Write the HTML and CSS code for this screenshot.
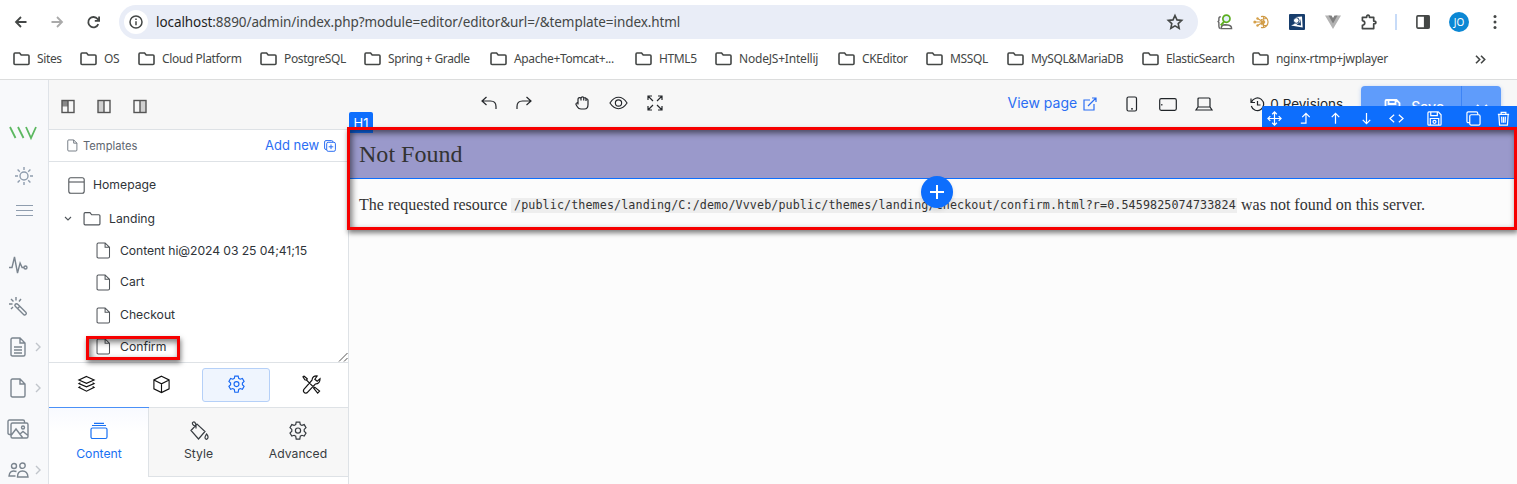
FILE: index.html
```html
<!DOCTYPE html>
<html lang="en">
<head>
<meta charset="utf-8">
<title>Page editor</title>
<link rel="stylesheet" href="styles.css">
</head>
<body>
<svg class="defs" width="0" height="0">
  <symbol id="folder" viewBox="0 0 17 14"><path d="M1 2.2V11.6Q1 12.5 2 12.5H15Q16 12.5 16 11.6V4Q16 3 15 3H8.2L6.6 1H2Q1 1 1 2.2Z"/></symbol>
  <symbol id="file" viewBox="0 0 16 18"><path d="M2.5 .9H9.7L14.4 5.6V15.6Q14.4 17 13 17H2.5Q1.1 17 1.1 15.6V2.3Q1.1 .9 2.5 .9ZM9.7 .9V5.6H14.4"/></symbol>
  <symbol id="gear" viewBox="0 0 20 20"><path d="M8.2 1.2h3.6l.5 2.3 1.6.9 2.3-.8 1.8 3.1-1.8 1.7v1.9l1.8 1.7-1.8 3.1-2.3-.8-1.6.9-.5 2.9H8.2l-.5-2.9-1.6-.9-2.3.8L2 12l1.8-1.7V8.4L2 6.7l1.8-3.1 2.3.8 1.6-.9Z"/><circle cx="10" cy="9.6" r="2.6"/></symbol>
  <symbol id="floppy" viewBox="0 0 16 16"><path d="M1 2Q1 1 2 1H12L15 4V14Q15 15 14 15H2Q1 15 1 14ZM4 1.2V5H11V1.2M3.5 15V8H12.5V15"/><circle cx="8" cy="11.5" r="1.6"/></symbol>
  <symbol id="chevron" viewBox="0 0 6 10"><path d="M1 1l4 4-4 4"/></symbol>
</svg>

<header class="browser">
  <div class="navbar">
    <svg class="nav-ico back" viewBox="0 0 12 12"><path d="M11.5 6H1M6 1L1 6l5 5"/></svg>
    <svg class="nav-ico forward" viewBox="0 0 12 12"><path d="M.5 6H11M6 1l5 5-5 5"/></svg>
    <svg class="nav-ico reload" viewBox="0 0 13 13"><path d="M11.3 8.2A5.2 5.2 0 1 1 10.6 3L12 4.6M12.1 .5V4.9H7.8"/></svg>
    <div class="address">
      <span class="info"><svg viewBox="0 0 14 14"><circle cx="7" cy="7" r="6"/><path d="M7 6.3v4M7 3.6v1.5"/></svg></span>
      <span class="url"><b>localhost</b>:8890/admin/index.php?module=editor/editor&amp;url=/&amp;template=index.html</span>
      <svg class="star" viewBox="0 0 16 16"><path d="M8 1.5l2 4.4 4.7.5-3.5 3.2 1 4.7L8 11.9l-4.2 2.4 1-4.7L1.300 6.400 6 5.900Z"/></svg>
    </div>
    <div class="extensions">
      <svg class="ext" viewBox="0 0 16 17"><path d="M3.500 3Q1.500 3 1.500 5V7L.7 8l.8 1v4Q1.500 15 3 15.500M4 15.500q0-4 4-4l3 .2q4 .5 4 3.800Z" fill="none" stroke="#666" stroke-width="1.500"/><circle cx="9.500" cy="5" r="3.800" fill="#e3f1fb" stroke="#5dae20" stroke-width="1.800"/><path d="M7 8L3.500 12" stroke="#5dae20" stroke-width="2"/></svg>
      <svg class="ext" viewBox="0 0 16 16"><path d="M8 2.600a5.600 5.600 0 1 1 0 10.800M1.500 8H10.500M4.500 4.500L10.500 8 4.500 11.500M10.500 2.500V13.500M8 5.500l5-1M8 10.500l5 1" fill="none" stroke="#cf9a45" stroke-width="1.200"/><circle cx="1.800" cy="8" r="1.500" fill="#d6a14a"/><circle cx="4.500" cy="4.500" r="1.200" fill="#d6a14a"/><circle cx="4.500" cy="11.500" r="1.200" fill="#d6a14a"/><circle cx="10.500" cy="8" r="1.800" fill="#d6a14a"/></svg>
      <svg class="ext" viewBox="0 0 16 16"><rect width="16" height="16" rx="1" fill="#173d6c"/><path d="M7 3L13 2.500 13.700 13.500 2 11.500 5.500 10" fill="#fff"/><path d="M11.500 4.500L12 11.500 7.500 10.800 11 8Z" fill="#173d6c"/><circle cx="7.300" cy="6.500" r="2.800" fill="#fff" stroke="#173d6c" stroke-width="1"/></svg>
      <svg class="ext" viewBox="0 0 16 16"><path d="M0 1.500h4.500L8 8l3.500-6.500H16L8 15Z" fill="#b3b3b3"/><path d="M3.500 1.500h3L8 4l1.500-2.500h3L8 9.500Z" fill="#808080"/></svg>
      <svg class="ext" viewBox="0 0 17 17"><path d="M1.500 3.500H6Q6 1.200 7.500 1.200T9 3.500h4.500V7.500Q15.800 7.500 15.800 9T13.500 10.500V15.500H1.500V12Q4 11.500 4 9.500T1.500 7Z" fill="none" stroke="#444746" stroke-width="1.800" stroke-linejoin="round"/></svg>
    </div>
    <span class="separator"></span>
    <svg class="side-ico" viewBox="0 0 14 14"><rect x=".9" y=".9" width="12.200" height="12.200" rx="1" fill="none" stroke="#444746" stroke-width="1.600"/><path d="M8.500 1H13V13H8.500Z" fill="#444746"/></svg>
    <span class="avatar">JO</span>
    <svg class="kebab" viewBox="0 0 4 16"><circle cx="2" cy="2.500" r="1.500"/><circle cx="2" cy="8" r="1.500"/><circle cx="2" cy="13.500" r="1.500"/></svg>
  </div>
  <nav class="bookmarks">
    <span class="bm"><svg><use href="#folder"/></svg><span>Sites</span></span>
    <span class="bm"><svg><use href="#folder"/></svg><span>OS</span></span>
    <span class="bm"><svg><use href="#folder"/></svg><span>Cloud Platform</span></span>
    <span class="bm"><svg><use href="#folder"/></svg><span>PostgreSQL</span></span>
    <span class="bm"><svg><use href="#folder"/></svg><span>Spring + Gradle</span></span>
    <span class="bm"><svg><use href="#folder"/></svg><span>Apache+Tomcat+...</span></span>
    <span class="bm"><svg><use href="#folder"/></svg><span>HTML5</span></span>
    <span class="bm wide"><svg><use href="#folder"/></svg><span>NodeJS+Intellij</span></span>
    <span class="bm"><svg><use href="#folder"/></svg><span>CKEditor</span></span>
    <span class="bm"><svg><use href="#folder"/></svg><span>MSSQL</span></span>
    <span class="bm"><svg><use href="#folder"/></svg><span>MySQL&amp;MariaDB</span></span>
    <span class="bm"><svg><use href="#folder"/></svg><span>ElasticSearch</span></span>
    <span class="bm last"><svg><use href="#folder"/></svg><span>nginx-rtmp+jwplayer</span></span>
    <svg class="more" viewBox="0 0 11 9"><path d="M1 .8l3.700 3.700L1 8.200M6 .8l3.700 3.700L6 8.200"/></svg>
  </nav>
</header>

<div class="app">
  <aside class="rail">
    <svg class="logo" viewBox="0 0 28 13"><path d="M1 1l5.500 11M9 1l5.500 11M17 1l5 11L27 1" /></svg>
    <svg class="sun" viewBox="0 0 18 18"><circle cx="9" cy="9" r="4"/><path d="M9 0v3M9 15v3M0 9h3M15 9h3M2.600 2.600l2.200 2.200M13.200 13.200l2.200 2.200M2.600 15.400l2.200-2.200M13.200 4.800l2.200-2.200"/></svg>
    <svg class="burger" viewBox="0 0 17 11"><path d="M0 .5h17M0 5.500h17M0 10.500h17"/></svg>
    <div class="rail-row r1"><svg class="i20" viewBox="0 0 20 20"><path d="M1 12.500H4L6.500 2l3 16 2.600-10 2 4.500H16"/><circle cx="17.500" cy="12.500" r="1.500"/></svg></div>
    <div class="rail-row r2"><svg class="i20" viewBox="0 0 20 20"><path d="M7 8.500q1.500-1.500 3 0l8 8q.8 1-.2 2t-2 .2L7.500 10.500Q6.500 9.500 7 8.500M10 12l2-2M8 1v3.500M3 3l2.500 2.500M1 8h3.500M13 3l-2 2.500M3 13l2-2"/></svg></div>
    <div class="rail-row r3"><svg class="i20 f" viewBox="0 0 16 20"><path d="M2.500 1H10l5 5V17.500Q15 19 13.500 19H2.500Q1 19 1 17.500V2.500Q1 1 2.500 1ZM10 1V6H15M4 10H12M4 13H12M4 16H12"/></svg><svg class="chev"><use href="#chevron"/></svg></div>
    <div class="rail-row r4"><svg class="i20 f" viewBox="0 0 16 20"><path d="M2.500 1H10l5 5V17.500Q15 19 13.500 19H2.500Q1 19 1 17.500V2.500Q1 1 2.500 1ZM10 1V6H15"/></svg><svg class="chev"><use href="#chevron"/></svg></div>
    <div class="rail-row r5"><svg class="pics" viewBox="0 0 22 20"><path d="M4 15.500H2.500Q1 15.500 1 14V2.500Q1 1 2.500 1H16Q17.500 1 17.500 2.500V4M5.500 4H19.500Q21 4 21 5.500V17.500Q21 19 19.500 19H5.500Q4 19 4 17.500V5.500Q4 4 5.500 4M4 16.500l5-6.500 6.500 8.500M13 15l3-2.500 5 4"/><circle cx="16" cy="8.500" r="1.500"/></svg></div>
    <div class="rail-row r6"><svg class="people" viewBox="0 0 21 16"><circle cx="6" cy="4" r="2.500"/><circle cx="14.500" cy="3.700" r="2.700"/><path d="M9.500 15q0-6 5-6t5.500 6ZM8.500 9.500Q1.500 7.500 1 14H7.500"/></svg><svg class="chev"><use href="#chevron"/></svg></div>
  </aside>

  <div class="workspace">
    <div class="toolbar">
      <div class="layouts">
        <svg viewBox="0 0 14 14"><rect class="fill2" x="1" y="1" width="6" height="6"/><rect x="1" y="1" width="12" height="12"/><path d="M7 1V13"/></svg>
        <svg viewBox="0 0 14 14"><rect class="fill" x="1" y="1" width="6" height="12"/><rect x="1" y="1" width="12" height="12"/><path d="M7 1V13"/></svg>
        <svg viewBox="0 0 14 14"><rect class="fill" x="7" y="1" width="6" height="12"/><rect x="1" y="1" width="12" height="12"/><path d="M7 1V13"/></svg>
      </div>
      <div class="tools">
        <svg class="undo" viewBox="0 0 16 14"><path d="M5.500 1L1 5l4.500 4M1 5h8.500Q15 5 15 10.500V13"/></svg>
        <svg class="redo" viewBox="0 0 16 14"><path d="M10.500 1L15 5l-4.500 4M15 5H6.500Q1 5 1 10.500V13"/></svg>
        <svg class="hand" viewBox="0 0 14 14"><path d="M3 8.500V3.500Q3 1.700 4.500 1.700T6 2.200Q6.300 .9 7.500 .9T9 2Q10.800 1.200 11 3 13 2.500 13 4.500V8.500Q13 13 9.500 13H6Q3.500 13 2.500 11L1 8.500Q.8 6.500 3 7M6 2.200V4.500M8.700 2.200V4.500M11 3V5"/></svg>
        <svg class="eye" viewBox="0 0 20 14"><path d="M1 7Q5 1 10 1t9 6q-4 6-9 6T1 7Z"/><circle cx="10" cy="7" r="3.300"/></svg>
        <svg class="expand" viewBox="0 0 16 16"><path d="M1 5V1H5M1 1l5 5M11 1h4V5M15 1l-5 5M1 11v4H5M1 15l5-5M15 11v4H11M15 15l-5-5"/></svg>
      </div>
      <a class="view">View page</a>
      <svg class="external" viewBox="0 0 14 14"><path d="M7 3H1V13H11V7M5 9L13 1M9 1h4V5"/></svg>
      <svg class="phone" viewBox="0 0 12 16"><rect x="1" y="1" width="9.500" height="14" rx="1.500"/><path d="M5 12.800h2"/></svg>
      <svg class="tablet" viewBox="0 0 18 13"><rect x=".7" y=".7" width="16.600" height="11.600" rx="1.500"/><path d="M2.800 6v1.500"/></svg>
      <svg class="laptop" viewBox="0 0 18 14"><path d="M3 10V2Q3 1 4 1H14Q15 1 15 2V10M3 10H15L17 13H1Z"/></svg>
      <svg class="history" viewBox="0 0 15 15"><path d="M1 1.500V5.500H5M1.500 5A6.300 6.300 0 1 1 1.300 9M7.500 4V8H10.500"/></svg>
      <span class="revisions">0 Revisions</span>
      <div class="save"><span class="save-main"><svg><use href="#floppy"/></svg>Save</span><span class="save-more"><svg viewBox="0 0 12 8"><path d="M1 1l5 5 5-5"/></svg></span></div>
    </div>

    <div class="body">
      <aside class="panel">
        <div class="panel-head"><svg class="doc"><use href="#file"/></svg><span class="head-title">Templates</span><a class="add">Add new</a><svg class="plus-ico" viewBox="0 0 12 12"><path d="M2.700 9.500H2Q.6 9.500 .6 8V2Q.6 .6 2 .6H7.500Q9 .6 9 2"/><rect x="2.700" y="2.300" width="8.700" height="9" rx="1.500"/><path d="M7 4.500v4.600M4.700 6.800h4.600"/></svg></div>
        <div class="tree">
          <div class="node home"><svg viewBox="0 0 17 17"><rect x=".8" y=".8" width="15.400" height="15.400" rx="2"/><path d="M1 5H16"/></svg><span>Homepage</span></div>
          <div class="node landing"><svg class="caret" viewBox="0 0 8 6"><path d="M1 1l3 3 3-3"/></svg><svg class="fold"><use href="#folder"/></svg><span>Landing</span></div>
          <div class="node page p1"><svg><use href="#file"/></svg><span>Content hi@2024 03 25 04;41;15</span></div>
          <div class="node page p2"><svg><use href="#file"/></svg><span>Cart</span></div>
          <div class="node page p3"><svg><use href="#file"/></svg><span>Checkout</span></div>
          <div class="node page p4"><svg><use href="#file"/></svg><span>Confirm</span></div>
          <div class="mark small"></div>
          <svg class="grip" viewBox="0 0 9 9"><path d="M0 8.500L8.500 0M5 8.500L8.500 5"/></svg>
        </div>
        <div class="modes">
          <span><svg viewBox="0 0 20 20"><path d="M10 1.500L18 5.200 10 8.700 2 5.200ZM3.500 8L2 9l8 3.500L18 9l-1.500-1M3.500 12L2 13l8 4 8-4-1.500-1"/></svg></span>
          <span><svg viewBox="0 0 20 20"><path d="M10 1.200l8 4V14.500l-8 4-8-4V5.200ZM2 5.200l8 4 8-4M10 9.200v9.300"/></svg></span>
          <span class="on"><svg><use href="#gear"/></svg></span>
          <span><svg viewBox="0 0 20 20"><path d="M2 1L1 2l2 3 2 .5 8.500 8.500M5 5.500L5.500 4 2 1M13 12.500l5.500 4.500-2 2-4.500-5.500M19 4l-3 2.500-2.500-2L16 1q-5-.5-5.500 4.500L2 15q-1.500 2.500 1 4 2 .5 3-1l8-8.500Q19 9.500 19 4Z"/></svg></span>
        </div>
        <div class="tabs">
          <span class="tab active"><svg viewBox="0 0 20 20"><rect x="2" y="7" width="16" height="10.500" rx="1.500"/><path d="M3 4.500h14M5 2.300h10"/></svg>Content</span>
          <span class="tab"><svg viewBox="0 0 20 20"><path d="M2 9.500L8 3l8 7.500-6.500 7.500ZM6 5.500Q2 2.500 4 1.200t3 2.800v3.500"/><path d="M17.500 13q3 3.500 .3 5.300-3.500-.5-.3-5.300Z"/></svg>Style</span>
          <span class="tab"><svg><use href="#gear"/></svg>Advanced</span>
        </div>
      </aside>

      <main class="canvas">
        <h1>Not Found</h1>
        <p><span class="lead">The requested resource</span><code>/public/themes/landing/C:/demo/Vvveb/public/themes/landing/checkout/confirm.html?r=0.5459825074733824</code><span class="tail">was not found on this server.</span></p>
        <span class="tag">H1</span>
        <div class="actions">
          <svg viewBox="0 0 16 16"><path d="M8 1V15M1 8H15M5.500 3.500L8 1l2.500 2.500M5.500 12.500L8 15l2.500-2.500M3.500 5.500L1 8l2.500 2.500M12.500 5.500L15 8l-2.500 2.500"/></svg>
          <svg viewBox="0 0 16 16"><path d="M3 13H8.500V2.500M4.500 6.500l4-4 4 4"/></svg>
          <svg viewBox="0 0 16 16"><path d="M8 13.500V2.500M4 6.500l4-4 4 4"/></svg>
          <svg viewBox="0 0 16 16"><path d="M8 2V13.500M4 9.500l4 4 4-4"/></svg>
          <svg viewBox="0 0 16 16"><path d="M5.500 4L1 8l4.500 4M10.500 4L15 8l-4.500 4"/></svg>
          <svg class="gap"><use href="#floppy"/></svg>
          <svg class="gap" viewBox="0 0 16 16"><rect x="4" y="4" width="11" height="11" rx="1.500"/><path d="M4 12.500H2.500Q1 12.500 1 11V2.500Q1 1 2.500 1H11Q12.500 1 12.500 2.500V4"/></svg>
          <svg viewBox="0 0 16 16"><path d="M2 3.500H14M5.500 3.500V1.500h5v2M3 3.500l.8 11.500h8.400L13 3.500M6 6l.3 6.500M8 6v6.500M10 6l-.3 6.500"/></svg>
        </div>
        <span class="insert"><svg viewBox="0 0 14 14"><path d="M7 0V14M0 7H14"/></svg></span>
        <div class="mark large"></div>
      </main>
    </div>
  </div>
</div>
</body>
</html>
```
FILE: styles.css
```css
* { box-sizing: border-box; }
body { margin: 0; width: 1517px; height: 484px; overflow: hidden; background: #fff; font-family: Inter, "Liberation Sans", sans-serif; font-size: 13px; color: #212529; }
svg { display: block; flex: none; fill: none; stroke: currentColor; stroke-width: 1.2; overflow: visible; }
.defs { position: absolute; }

.browser { height: 80px; border-bottom: 1px solid #dcdddd; font-family: "Noto Sans", sans-serif; color: #444746; }
.navbar { height: 44px; display: flex; align-items: center; padding: 0 20px 0 15px; }
.nav-ico { width: 12px; height: 12px; stroke-width: 1.8; color: #444746; margin-right: 24px; }
.forward { color: #aaa; }
.reload { width: 13px; height: 13px; margin-right: 19px; }
.address { width: 1080px; height: 34px; border-radius: 17px; background: #e9edf7; display: flex; align-items: center; padding: 0 15px 0 5px; }
.info { width: 24px; height: 24px; border-radius: 50%; background: #fff; display: flex; align-items: center; justify-content: center; margin-right: 8px; }
.info svg { width: 14px; height: 14px; stroke-width: 1.5; }
.url { flex: 1; font-size: 13.5px; letter-spacing: -.08px; white-space: nowrap; }
.url b { font-weight: 400; color: #1f1f1f; }
.star { width: 16px; height: 16px; stroke-width: 1.6; }
.extensions { display: flex; gap: 20px; margin-left: 19px; }
.ext { width: 16px; height: 16px; stroke: none; }
.separator { width: 2px; height: 16px; background: #c7dbf8; margin: 0 19px 0 18px; }
.side-ico { width: 14px; height: 14px; margin-right: 19px; }
.avatar { width: 20px; height: 20px; border-radius: 50%; background: #0b87d4; color: #fff; font-size: 10px; line-height: 20px; text-align: center; }
.kebab { width: 4px; height: 16px; fill: currentColor; stroke: none; margin-left: 24px; }

.bookmarks { height: 30px; padding-left: 13px; display: grid; grid-template-columns: 67px 58px 122px 104px 126px 145px 80px 123px 88px 81px 135px 110px 223px 11px; align-items: center; font-size: 12px; letter-spacing: -.38px; white-space: nowrap; }
.bm { display: flex; align-items: center; gap: 7px; }
.bm.wide { letter-spacing: -.2px; }
.bm.last { letter-spacing: -.32px; }
.bm svg { width: 17px; height: 14px; stroke-width: 1.6; }
.bm > span { position: relative; top: -.5px; }
.more { width: 11px; height: 9px; stroke-width: 1.600; }

.app { display: flex; height: 404px; }
.rail { width: 49px; flex: none; background: #f8f9fb; border-right: 1px solid #dfe3e8; color: #7b858f; padding-top: 46px; }
.logo { width: 28px; height: 13px; margin: 0 0 0 9px; color: #5cb860; stroke-width: 1.800; }
.sun { width: 18px; height: 18px; margin: 28px 0 0 15px; color: #8f9dae; stroke-width: 1.400; }
.burger { width: 17px; height: 11px; margin: 20px 0 0 16px; color: #8f9dae; }
.rail-row { display: flex; align-items: center; height: 20px; padding-left: 8px; }
.rail-row svg { stroke-width: 1.400; }
.i20 { width: 20px; height: 20px; }
.i20.f { width: 16px; margin-left: 2px; }
.chev { width: 6px; height: 10px; margin-left: 9px; color: #c1c5cb; }
.pics { width: 22px; height: 20px; }
.people { width: 21px; height: 16px; }
.r1 { margin-top: 39px; }
.r2 { margin-top: 21px; }
.r3 { margin-top: 21px; }
.r4 { margin-top: 21px; }
.r5 { margin-top: 21px; padding-left: 7px; }
.r6 { margin-top: 21px; }
.r6 .chev { margin-left: 6px; }

.workspace { flex: 1; min-width: 0; }
.toolbar { height: 50px; background: #f7f7f7; border-bottom: 1px solid #dee2e6; display: flex; align-items: flex-start; padding: 0 16px 0 12px; }
.layouts { display: flex; gap: 22px; padding-top: 19px; width: 420px; color: #555; }
.layouts svg { width: 14px; height: 15px; stroke-width: 1.400; }
.layouts .fill { fill: #d0d0d0; stroke: none; }
.layouts .fill2 { fill: #888; stroke: none; }
.tools { display: flex; align-items: center; height: 16px; margin-top: 15px; padding-left: 1px; width: 528px; color: #24272b; }
.undo, .redo { width: 16px; height: 14px; margin-right: 19px; }
.redo { margin-right: 43px; }
.hand { width: 14px; height: 14px; margin-right: 20px; }
.eye { width: 19px; height: 14px; margin-right: 19px; }
.expand { width: 16px; height: 16px; }
.view { width: 76px; margin-top: 14px; font-size: 14px; line-height: 18px; color: #2b6ef3; white-space: nowrap; }
.external { width: 14px; height: 14px; margin: 17px 29px 0 0; color: #2b6ef3; }
.phone { width: 12px; height: 16px; margin: 16px 21px 0 0; }
.tablet { width: 18px; height: 13px; margin: 18px 18px 0 0; }
.laptop { width: 18px; height: 14px; margin: 17px 37px 0 0; }
.history { width: 15px; height: 15px; margin: 17px 5px 0 0; }
.revisions { width: 91px; margin-top: 15px; font-size: 13.500px; line-height: 18px; white-space: nowrap; }
.save { width: 140px; height: 43px; margin-top: 6px; border-radius: 4px; background: #5f9cfb; color: #fff; display: flex; box-shadow: 0 1px 4px #bcd0f0; }
.save-main { width: 101px; border-right: 1px solid #3d84f5; display: flex; align-items: center; justify-content: center; gap: 10px; font-size: 14px; font-weight: 500; padding: 0 0 2px 6px; }
.save-main svg { width: 17px; height: 16px; stroke-width: 1.800; }
.save-more { flex: 1; display: flex; align-items: center; justify-content: center; }
.save-more svg { width: 12px; height: 8px; stroke-width: 2; }

.body { display: flex; height: 354px; }
.panel { width: 300px; flex: none; border-right: 1px solid #dee2e6; background: #fff; }
.panel-head { height: 32px; display: flex; align-items: center; border-bottom: 1px solid #dee2e6; padding-left: 18px; color: #5e6670; font-size: 11.200px; }
.doc { width: 11px; height: 13px; margin-right: 5px; }
.head-title { width: 182px; padding-top: 1px; }
.add { width: 59px; margin-top: -1px; font-size: 13px; color: #2b6ef3; white-space: nowrap; }
.plus-ico { width: 12px; height: 12px; color: #2b6ef3; stroke-width: 1; }
.tree { position: relative; height: 201px; border-bottom: 1px solid #dee2e6; padding-top: 7px; font-size: 12.200px; }
.node { display: flex; align-items: center; height: 32px; color: #2f3439; white-space: nowrap; }
.node span { position: relative; top: -.5px; }
.node svg { stroke-width: 1.100; color: #50555a; }
.home { padding-left: 19px; gap: 8px; }
.home svg { width: 17px; height: 17px; }
.landing { height: 35px; padding-left: 15px; }
.caret { width: 8px; height: 6px; margin-right: 11px; }
.landing .fold { width: 18px; height: 16px; margin-right: 8px; }
.page { padding-left: 47px; gap: 9px; height: 32px; }
.page svg { width: 15px; height: 17px; }
.page.p1 { height: 29px; letter-spacing: -.08px; }
.page.p2 { height: 34px; }
.page.p4 { height: 31px; }
.grip { position: absolute; right: 0; bottom: 0; width: 9px; height: 9px; stroke-width: 1; color: #555; }
.mark { position: absolute; border: 3px solid #f60000; box-shadow: 1px 3px 5px rgba(0,0,0,.5), inset 2px 3px 6px rgba(0,0,0,.55); pointer-events: none; }
.mark.small { left: 37px; top: 174px; width: 94px; height: 24px; }
.modes { height: 45px; display: grid; grid-template-columns: repeat(4, 68px); column-gap: 7px; padding: 5px 0 0 3px; border-bottom: 1px solid #dee2e6; }
.modes span { height: 34px; border: 1px solid transparent; border-radius: 3px; display: flex; align-items: center; justify-content: center; color: #111; padding-bottom: 2px; }
.modes svg { width: 19px; height: 19px; }
.modes .on { background: #eff5fe; border-color: #b5d0f8; color: #1768f3; }
.tabs { height: 69px; display: grid; grid-template-columns: 100px 99px 100px; }
.tab { border-bottom: 1px solid #dee2e6; background: #f7f7f7; color: #373c41; display: flex; flex-direction: column; align-items: center; padding-top: 13px; gap: 5px; font-size: 12.200px; line-height: 15px; }
.tab svg { width: 20px; height: 20px; }
.tab.active { position: relative; margin-top: -1px; padding: 13px 0 0; height: 70px; border-top: 1px solid #4a90f7; border-bottom: 0; box-shadow: inset -1px 0 #dee2e6; background: linear-gradient(#f8faff, #fff 24px); color: #1971f3; }

.canvas { position: relative; flex: 1; background: #fcfcfc; font-family: "Liberation Serif", serif; color: #333; }
.canvas h1 { margin: -2px 0 0; height: 51px; background: #9a99cb; border-top: 1px solid #0d6efd; border-bottom: 1px solid #0d6efd; padding-left: 10px; font-size: 24px; font-weight: 400; line-height: 51px; letter-spacing: .03px; }
.canvas p { margin: 15px 0 0 10px; display: flex; align-items: center; height: 21px; font-size: 16px; white-space: nowrap; }
.lead { width: 152px; }
.canvas code { width: 726px; margin: 1px 4px 0 0; padding: 0 3px; background: #eee; font: 11.700px/15px "DejaVu Sans Mono", monospace; letter-spacing: .11px; }
.tag { position: absolute; left: 0; top: -18px; width: 24px; height: 21px; border-radius: 2px 2px 0 0; background: #0d6efd; color: #fff; font: 13px/22px Inter, sans-serif; text-align: center; }
.actions { position: absolute; right: 0; top: -24px; width: 255px; height: 22px; padding: 2px 0 0 5px; background: #0d6efd; color: #fff; display: flex; align-items: center; gap: 14.600px; border-radius: 2px 0 0 0; }
.actions svg { width: 15px; height: 15px; stroke-width: 1.300; margin-right: 1px; }
.actions .gap { margin-left: 7.500px; }
.insert { position: absolute; left: 572px; top: 46px; width: 32px; height: 32px; border-radius: 50%; background: #0d6efd; color: #fff; display: flex; align-items: center; justify-content: center; box-shadow: 0 2px 4px rgba(0,0,0,.12); }
.insert svg { width: 14px; height: 14px; stroke-width: 2; }
.mark.large { left: -2px; top: -3px; width: 1170px; height: 103px; }
```
